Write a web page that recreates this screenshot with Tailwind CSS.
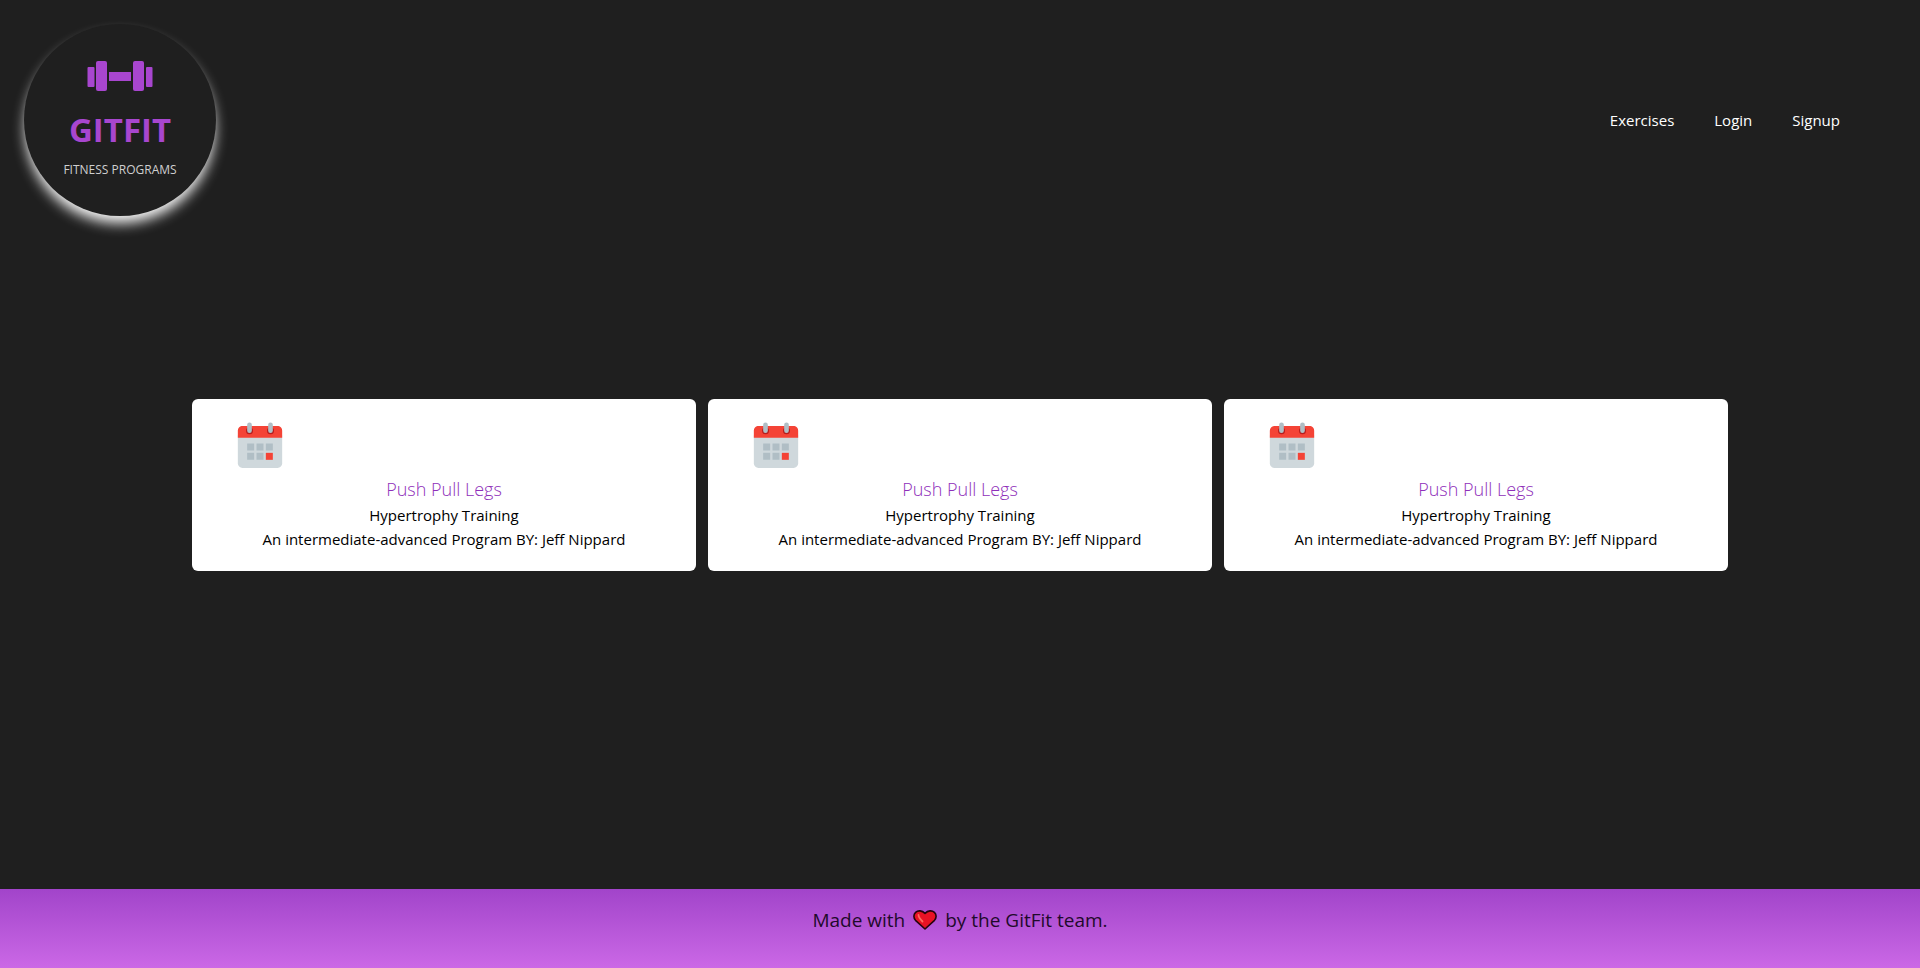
<!DOCTYPE html>
<html lang="en">
<head>
<meta charset="utf-8">
<meta name="viewport" content="width=device-width, initial-scale=1">
<title>GitFit</title>
<script src="https://cdn.jsdelivr.net/npm/@tailwindcss/browser@4"></script>
</head>
<body class="flex min-h-screen flex-col bg-[#1f1f1f] font-['Open_Sans','Noto_Sans',sans-serif] text-black">
<svg class="hidden" aria-hidden="true">
  <symbol id="calendar" viewBox="0 0 48 48">
    <path fill="#CFD8DC" d="M5 38V14h38v24c0 2.200-1.800 4-4 4H9c-2.200 0-4-1.800-4-4z"/>
    <path fill="#F44336" d="M43 10v6H5v-6c0-2.200 1.800-4 4-4h30c2.200 0 4 1.800 4 4z"/>
    <path fill="#B71C1C" d="M33 7a3 3 0 1 0 0 6 3 3 0 0 0 0-6zM15 7a3 3 0 1 0 0 6 3 3 0 0 0 0-6z"/>
    <path fill="#B0BEC5" d="M33 3a2 2 0 0 0-2 2v5a2 2 0 0 0 4 0V5a2 2 0 0 0-2-2zM15 3a2 2 0 0 0-2 2v5a2 2 0 0 0 4 0V5a2 2 0 0 0-2-2z"/>
    <path fill="#B0BEC5" d="M13 21h6v6h-6zM21 21h6v6h-6zM29 21h6v6h-6zM13 29h6v6h-6zM21 29h6v6h-6z"/>
    <path fill="#F44336" d="M29 29h6v6h-6z"/>
  </symbol>
</svg>

<header class="flex items-center justify-between py-6 pr-20 pl-6">
  <a href="#" class="flex size-48 flex-col items-center rounded-full bg-[#1f1f1f] pt-9 shadow-[0_9px_14px_-2px_#fff]">
    <svg class="h-8 w-17" viewBox="0 0 68 32" fill="#a846cf" aria-hidden="true">
      <rect x="1.500" y="7" width="7" height="20" rx="1"/>
      <rect x="10" y="1" width="11" height="30" rx="2"/>
      <rect x="23" y="12" width="22" height="9"/>
      <rect x="47" y="1" width="11" height="30" rx="2"/>
      <rect x="60" y="7" width="6.500" height="20" rx="1"/>
    </svg>
    <span class="mt-4 text-[33px] leading-[44px] font-bold text-[#a846cf]">GITFIT</span>
    <span class="mt-2 text-xs leading-5 text-[#cfcfcf]">FITNESS PROGRAMS</span>
  </a>
  <nav class="flex gap-10 text-[15px] leading-6 text-white">
    <a href="#">Exercises</a>
    <a href="#">Login</a>
    <a href="#">Signup</a>
  </nav>
</header>

<main class="flex flex-1 items-center px-[10%]">
  <div class="mb-40 grid w-full grid-cols-3 gap-3">
    <article class="rounded-md bg-white px-10 py-5 text-center text-[15px] leading-6">
      <svg class="size-14" aria-hidden="true"><use href="#calendar"/></svg>
      <h2 class="text-lg leading-7 font-light"><a href="#" class="text-[#8f2fba]">Push Pull Legs</a></h2>
      <p>Hypertrophy Training</p>
      <p>An intermediate-advanced Program BY: Jeff Nippard</p>
    </article>
    <article class="rounded-md bg-white px-10 py-5 text-center text-[15px] leading-6">
      <svg class="size-14" aria-hidden="true"><use href="#calendar"/></svg>
      <h2 class="text-lg leading-7 font-light"><a href="#" class="text-[#8f2fba]">Push Pull Legs</a></h2>
      <p>Hypertrophy Training</p>
      <p>An intermediate-advanced Program BY: Jeff Nippard</p>
    </article>
    <article class="rounded-md bg-white px-10 py-5 text-center text-[15px] leading-6">
      <svg class="size-14" aria-hidden="true"><use href="#calendar"/></svg>
      <h2 class="text-lg leading-7 font-light"><a href="#" class="text-[#8f2fba]">Push Pull Legs</a></h2>
      <p>Hypertrophy Training</p>
      <p>An intermediate-advanced Program BY: Jeff Nippard</p>
    </article>
  </div>
</main>

<footer class="flex justify-center bg-linear-to-b from-[#a244ca] to-[#cb68e6] pt-4 pb-[33px]">
  <p class="flex items-center gap-2 text-[19px] leading-[30px] text-[#1f0a2b]">
    <span>Made with</span>
    <svg class="h-5 w-6" viewBox="0 0 24 20" role="img" aria-label="love">
      <path fill="#e81224" stroke="#26040c" stroke-width="1.600" stroke-linejoin="round" d="M12 19L2.500 10.300C.3 8 .4 4.400 2.600 2.400 5 .2 9 .3 12 3.400 15 .3 19 .2 21.400 2.400c2.200 2 2.300 5.600.1 7.900z"/>
      <path fill="none" stroke="#ff6b5e" stroke-width="1.800" stroke-linecap="round" d="M5.500 5c0 2.500 2 4.500 4 6.500"/>
    </svg>
    <span>by the GitFit team.</span>
  </p>
</footer>
</body>
</html>
